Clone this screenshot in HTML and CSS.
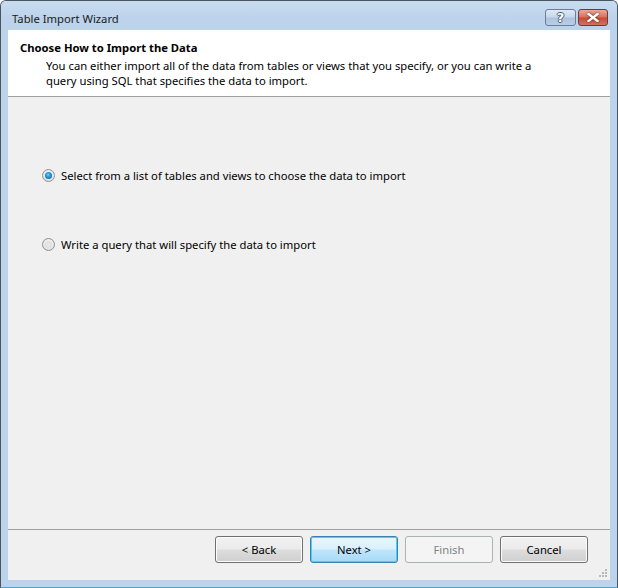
FILE: index.html
```html
<!DOCTYPE html>
<html lang="en">
<head>
  <meta charset="UTF-8" />
  <title>Table Import Wizard</title>
  <link rel="stylesheet" href="styles.css">
</head>
<body>
  <div class="window">
    <div class="titlebar">
      <span class="title">Table Import Wizard</span>
      <div class="caption-buttons">
        <span class="cap-btn help">?</span>
        <span class="cap-btn close">
          <svg width="12" height="9" viewBox="0 0 12 9">
            <path d="M1.5 1 L10.5 8 M10.5 1 L1.5 8" stroke="#fff" stroke-width="2.4" stroke-linecap="square" fill="none"/>
          </svg>
        </span>
      </div>
    </div>

    <div class="client">
      <div class="header">
        <h1>Choose How to Import the Data</h1>
        <p>You can either import all of the data from tables or views that you specify, or you can write a query using SQL that specifies the data to import.</p>
      </div>

      <div class="content">
        <label class="option">
          <span class="radio checked"></span>
          Select from a list of tables and views to choose the data to import
        </label>
        <label class="option">
          <span class="radio"></span>
          Write a query that will specify the data to import
        </label>
      </div>

      <div class="footer">
        <button class="btn">&lt; Back</button>
        <button class="btn default">Next &gt;</button>
        <button class="btn" disabled>Finish</button>
        <button class="btn">Cancel</button>
        <svg class="grip" width="9" height="9" viewBox="0 0 9 9">
          <g fill="#b8b8b8">
            <rect x="6" y="0" width="2" height="2"/>
            <rect x="3" y="3" width="2" height="2"/>
            <rect x="6" y="3" width="2" height="2"/>
            <rect x="0" y="6" width="2" height="2"/>
            <rect x="3" y="6" width="2" height="2"/>
            <rect x="6" y="6" width="2" height="2"/>
          </g>
        </svg>
      </div>
    </div>
  </div>
</body>
</html>
```

FILE: styles.css
```css
body {
  margin: 0;
  background: #fff;
  font-family: 'Noto Sans', 'Open Sans', sans-serif;
  font-size: 11.25px;
  color: #000;
}

.window {
  box-sizing: border-box;
  width: 618px;
  height: 588px;
  display: flex;
  flex-direction: column;
  border: 1px solid #4a5560;
  border-bottom-color: #27b6d3;
  border-radius: 6px 6px 0 0;
  background: #bcd3eb;
  padding: 0 7px 7px 7px;
}

.titlebar {
  height: 29px;
  display: flex;
  align-items: flex-start;
  justify-content: space-between;
  background: linear-gradient(#c9dcf0, #bcd3eb 60%);
  margin: 0 -7px;
  padding: 0 9px 0 11px;
  border-radius: 5px 5px 0 0;
}

.title {
  margin-top: 10px;
  color: #1a1a1a;
  line-height: 15px;
}

.caption-buttons {
  display: flex;
  gap: 2px;
  margin-top: 8px;
}

.cap-btn {
  box-sizing: border-box;
  height: 17px;
  display: flex;
  align-items: center;
  justify-content: center;
  border: 1px solid #6d7e94;
  border-radius: 3px;
}

.cap-btn.help {
  width: 31px;
  font-family: 'DejaVu Sans', sans-serif;
  font-weight: bold;
  font-size: 13px;
  color: #fff;
  text-shadow: 1px 0 0 #4a5f78, -1px 0 0 #4a5f78, 0 1px 0 #4a5f78, 0 -1px 0 #4a5f78;
  background: linear-gradient(#dfe9f5 0%, #c6d7ea 48%, #adc3dd 52%, #b9cde6 100%);
}

.cap-btn.close {
  width: 30px;
  border-color: #6e3b35;
  background: linear-gradient(#e9a99c 0%, #d9705f 48%, #c64a35 52%, #d2735e 100%);
}

.close svg {
  filter: drop-shadow(0 0 1px #5a1f14);
}

.client {
  flex: 1;
  display: flex;
  flex-direction: column;
  background: #f0f0f0;
}

.header {
  height: 67px;
  box-sizing: border-box;
  background: #fff;
  border-bottom: 1px solid #a0a0a0;
  padding: 10px 12px 0 12px;
}

.header h1 {
  margin: 0;
  font-size: 11.25px;
  font-weight: bold;
  line-height: 15px;
}

.header p {
  margin: 3px 0 0 26px;
  line-height: 15px;
  width: 500px;
}

.content {
  flex: 1;
  display: flex;
  flex-direction: column;
  gap: 54px;
  padding: 71px 0 0 34px;
  border-bottom: 1px solid #a0a0a0;
}

.option {
  display: flex;
  align-items: center;
  gap: 6px;
  line-height: 15px;
}

.radio {
  position: relative;
  box-sizing: border-box;
  width: 13px;
  height: 13px;
  border: 1px solid #8f9193;
  border-radius: 50%;
  background: radial-gradient(circle at 50% 40%, #fdfdfd 0%, #e6e6e6 60%, #cfcfcf 100%);
}

.radio::after {
  content: '';
  position: absolute;
  left: 2px;
  top: 2px;
  width: 7px;
  height: 7px;
  border-radius: 50%;
  background: radial-gradient(circle at 50% 50%, #eaeaea, #dadada);
}

.radio.checked::after {
  background: radial-gradient(circle at 45% 40%, #6fd0f6 0%, #1f8fd3 45%, #0d4f8c 100%);
}

.footer {
  position: relative;
  box-sizing: border-box;
  height: 50px;
  display: flex;
  justify-content: flex-end;
  align-items: flex-start;
  gap: 7px;
  padding: 6px 22px 0 0;
}

.btn {
  box-sizing: border-box;
  width: 88px;
  height: 27px;
  border: 1px solid #707070;
  border-radius: 3px;
  font-family: 'Noto Sans', 'Open Sans', sans-serif;
  font-size: 11.25px;
  color: #000;
  background: linear-gradient(#f2f2f2 0%, #ebebeb 48%, #dddddd 52%, #cfcfcf 100%);
  box-shadow: inset 0 0 0 1px #fcfcfc;
}

.btn.default {
  border-color: #3c7fb1;
  background: linear-gradient(#eaf6fd 0%, #d9f0fc 48%, #bee6fd 52%, #a7d9f5 100%);
  box-shadow: inset 0 0 0 1px #48d0f8;
}

.btn:disabled {
  border-color: #adb2b5;
  background: #f4f4f4;
  color: #838383;
  box-shadow: none;
}

.grip {
  position: absolute;
  right: 2px;
  bottom: 2px;
}
```
